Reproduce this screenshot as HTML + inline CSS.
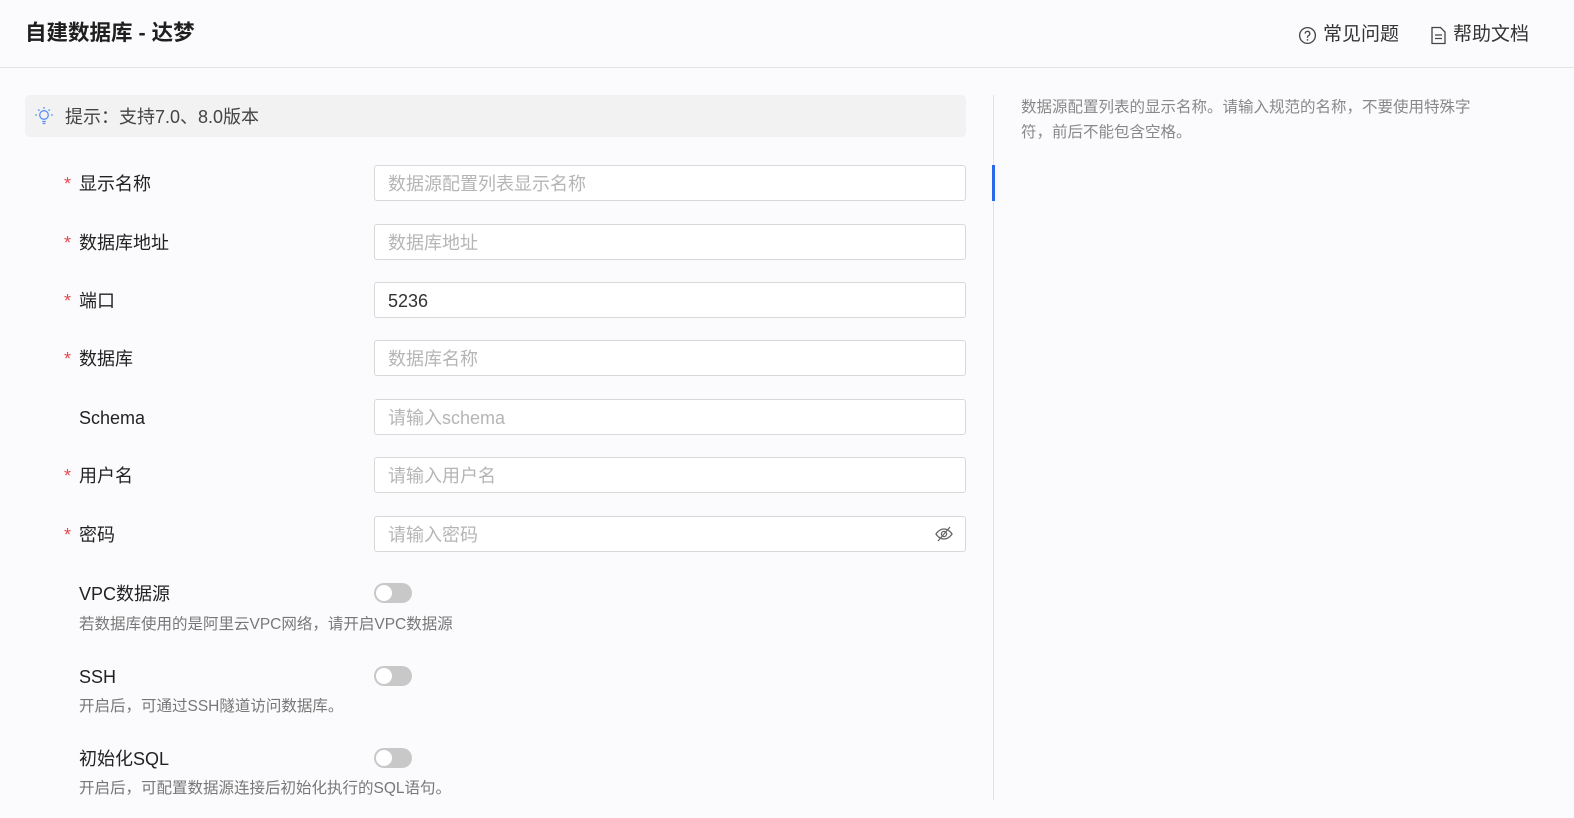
<!DOCTYPE html>
<html><head><meta charset="utf-8"><style>
*{box-sizing:border-box;margin:0;padding:0}
body{width:1574px;height:818px;background:#fbfbfd;font-family:"Liberation Sans","Noto Sans CJK SC",sans-serif;color:#222;position:relative;overflow:hidden}
.a{position:absolute}
.hd{left:0;top:0;width:1574px;height:68px;border-bottom:1px solid #e2e2e2}
.title{left:25px;top:18px;font-size:21.5px;line-height:30px;font-weight:bold;color:#1f1f1f}
.lnk{top:20px;font-size:19px;line-height:30px;color:#333;display:flex;align-items:center;gap:6px}
.tip{left:25px;top:95px;width:941px;height:42px;background:#f2f2f2;border-radius:5px;font-size:18px;line-height:44px;color:#444;padding:0 0 0 40px}
.div{left:993px;top:95px;width:1px;height:705px;background:#e2e2e2}
.lab{left:79px;font-size:18px;line-height:38px;color:#222}
.star{left:64px;font-size:18px;line-height:38px;color:#e5484d}
.inp{left:374px;width:592px;height:36px;border:1px solid #d8d8d8;border-radius:3px;background:#fff;font-size:18px;line-height:36px;color:#b5b5b5;padding:0 0 0 13px}
.tg{left:374px;width:38px;height:20px;border-radius:10px;background:#c8c8c8}
.tg::after{content:"";position:absolute;left:2px;top:2px;width:16px;height:16px;border-radius:50%;background:#fff}
.desc{left:79px;font-size:15.5px;line-height:20px;color:#777}
</style></head><body>
<div class="a hd"></div>
<div class="a title">自建数据库 - 达梦</div>
<div class="a lnk" style="left:1298px"><svg width="19" height="19" viewBox="0 0 20 20"><circle cx="10" cy="10" r="8.3" fill="none" stroke="#444" stroke-width="1.4"/><path d="M7.6 8a2.4 2.4 0 1 1 3.4 2.2c-.7.4-1 .8-1 1.6v.6" fill="none" stroke="#444" stroke-width="1.4"/><circle cx="10" cy="14.6" r=".9" fill="#444"/></svg>常见问题</div>
<div class="a lnk" style="left:1430px"><svg width="17" height="19" viewBox="0 0 17 19"><path d="M2 1.5h8.5l4.5 4.5v11.5H2z" fill="none" stroke="#444" stroke-width="1.3"/><path d="M5 9h7M5 12.5h7" stroke="#444" stroke-width="1.3"/></svg>帮助文档</div>
<div class="a tip">提示：支持7.0、8.0版本</div>
<svg class="a" style="left:34px;top:106px" width="20" height="20" viewBox="0 0 20 20"><circle cx="10" cy="9" r="4.3" fill="none" stroke="#5b8ff9" stroke-width="1.3"/><path d="M8.2 15.5h3.6M8.6 17.5h2.8M10 1v1.8M3 9H1.2M18.8 9H17M4.3 3.5l1.2 1.2M15.7 3.5l-1.2 1.2" stroke="#5b8ff9" stroke-width="1.3"/></svg>
<div class="a div"></div>
<div class="a" style="left:992px;top:165px;width:3px;height:36px;background:#2a6ae9"></div>
<div class="a" style="left:1021px;top:95px;width:470px;font-size:15.5px;line-height:25px;color:#888">数据源配置列表的显示名称。请输入规范的名称，不要使用特殊字符，前后不能包含空格。</div>

<div class="a star" style="top:165px">*</div><div class="a lab" style="top:165px">显示名称</div><div class="a inp" style="top:165px">数据源配置列表显示名称</div>
<div class="a star" style="top:224px">*</div><div class="a lab" style="top:224px">数据库地址</div><div class="a inp" style="top:224px">数据库地址</div>
<div class="a star" style="top:282px">*</div><div class="a lab" style="top:282px">端口</div><div class="a inp" style="top:282px;color:#333">5236</div>
<div class="a star" style="top:340px">*</div><div class="a lab" style="top:340px">数据库</div><div class="a inp" style="top:340px">数据库名称</div>
<div class="a lab" style="top:399px">Schema</div><div class="a inp" style="top:399px">请输入schema</div>
<div class="a star" style="top:457px">*</div><div class="a lab" style="top:457px">用户名</div><div class="a inp" style="top:457px">请输入用户名</div>
<div class="a star" style="top:516px">*</div><div class="a lab" style="top:516px">密码</div><div class="a inp" style="top:516px">请输入密码</div>
<svg class="a" style="left:934px;top:524px" width="20" height="20" viewBox="0 0 20 20"><path d="M2 10s3-5 8-5 8 5 8 5-3 5-8 5-8-5-8-5z" fill="none" stroke="#666" stroke-width="1.3"/><circle cx="10" cy="10" r="2.6" fill="none" stroke="#666" stroke-width="1.3"/><path d="M4 17L16 3" stroke="#666" stroke-width="1.3"/></svg>

<div class="a lab" style="top:575px">VPC数据源</div><div class="a tg" style="top:583px"></div>
<div class="a desc" style="top:615px">若数据库使用的是阿里云VPC网络，请开启VPC数据源</div>
<div class="a lab" style="top:658px">SSH</div><div class="a tg" style="top:666px"></div>
<div class="a desc" style="top:697px">开启后，可通过SSH隧道访问数据库。</div>
<div class="a lab" style="top:740px">初始化SQL</div><div class="a tg" style="top:748px"></div>
<div class="a desc" style="top:779px">开启后，可配置数据源连接后初始化执行的SQL语句。</div>
</body></html>
